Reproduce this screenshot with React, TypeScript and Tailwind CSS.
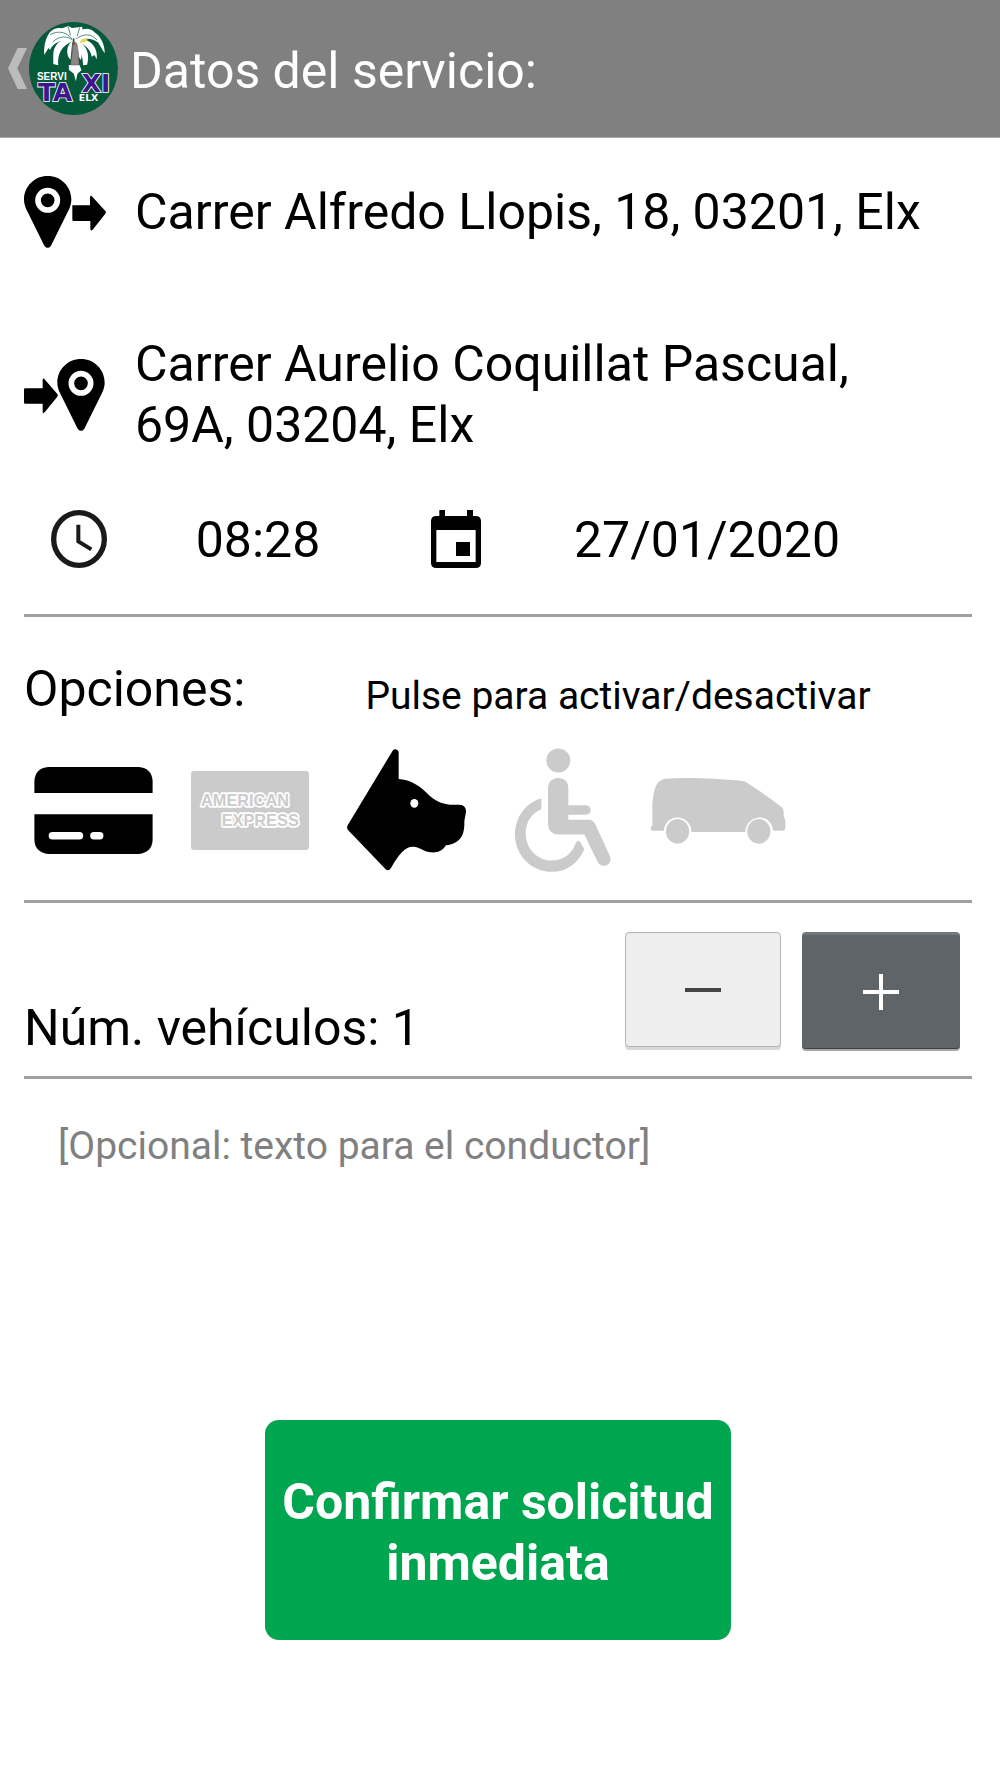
import { useState } from "react";
import type { ReactNode } from "react";

function Logo() {
  return (
    <svg viewBox="87 66 268 279" preserveAspectRatio="none" className="h-[93px] w-[89px] shrink-0" role="img" aria-label="Servi Taxi Elx">
      <ellipse cx="221" cy="205.500" rx="134" ry="139.500" fill="#045a3a" />
      <g fill="#fff">
        <path d="M221 112 C205 82 165 72 145 104 C136 118 131 142 133 164 L146 144 L150 150 C160 128 185 116 219 122Z" />
        <path d="M218 118 C190 112 160 128 160 166 L160 192 L175 196 C172 164 185 136 219 124Z" />
        <path d="M219 122 C204 132 198 150 205 170 L212 180 L217 130Z" />
        <path d="M224 112 C232 86 268 76 286 98 C303 108 316 136 315 160 C308 148 302 140 296 128 C278 112 252 114 226 122Z" />
        <path d="M224 116 C262 112 296 134 291 178 L284 165 L276 170 C272 146 254 130 224 125Z" />
        <path d="M224 122 C258 126 272 160 262 194 L250 196 C248 168 244 146 224 127Z" />
        <path d="M226 128 C244 142 250 160 243 180 L235 168Z" />
        <path d="M178 88 L206 78 L216 84 L248 80 L246 108 L225 116 L206 108Z" />
        <path d="M207 195 H239 L245 211 L233 221 L228 244 L222 221 L207 209Z" />
      </g>
      <g stroke="#045a3a" strokeWidth="2" fill="none">
        <path d="M150 104 C178 90 200 96 218 118 M205 80 L212 106 M240 82 L232 108 M158 126 C180 106 202 108 218 120 M228 117 C254 98 276 102 292 120" />
      </g>
      <path d="M238 130 L248 116 L264 118 L258 125Z" fill="#e5d84d" />
      <path d="M218 136 L222 124 L231 130 L236 160 L238 195 H212 L217 160Z" fill="#8c8787" stroke="#555" strokeWidth="1.500" />
      <path d="M219 126 h6 v10 h-6Z" fill="#994f36" />
      <g fontFamily="DejaVu Sans, sans-serif" fontWeight="700">
        <text x="111" y="239" fontSize="30" fill="#fff" fontFamily="Liberation Sans, sans-serif">SERVI</text>
        <g fontSize="75" fill="#3e168b" stroke="#fff" strokeWidth="5" paintOrder="stroke">
          <text x="114" y="302">TA</text>
          <text x="246" y="277">XI</text>
        </g>
        <text x="237" y="303" fontSize="28" fill="#fff">ELX</text>
      </g>
    </svg>
  );
}

function Pin({ x }: { x: number }) {
  return (
    <g transform={`translate(${x} 0)`}>
      <path d="M71 0 C31 0 0 32 0 70 C0 82 3 92 8 102 L61 209 Q71 222 81 209 L134 102 C139 92 142 82 142 70 C142 32 111 0 71 0Z" />
      <circle cx="71" cy="73" r="29" fill="none" stroke="#fff" strokeWidth="17" />
    </g>
  );
}

function OriginIcon() {
  return (
    <svg viewBox="0 0 246 216" className="h-[72px] w-[82px] shrink-0" aria-hidden="true">
      <Pin x={0} />
      <path d="M145 88 H198 V62 Q200 56 205 62 L244 105 Q247 109 244 113 L206 161 Q200 166 199 160 V135 H149 Q145 135 145 131Z" />
    </svg>
  );
}

function DestinationIcon() {
  return (
    <svg viewBox="0 0 246 216" className="h-[72px] w-[82px] shrink-0" aria-hidden="true">
      <Pin x={100} />
      <path d="M0 91 Q0 88 4 88 H56 V61 Q58 56 63 62 L100 105 Q103 109 100 113 L62 160 Q57 165 56 160 V134 H4 Q0 134 0 131Z" />
    </svg>
  );
}

function ClockIcon() {
  return (
    <svg viewBox="0 0 168 174" className="h-[58px] w-[56px]" fill="none" stroke="#1a1a1a" aria-hidden="true">
      <ellipse cx="84" cy="87" rx="76" ry="79" strokeWidth="16" />
      <path d="M82 44 V94 L121 118" strokeWidth="12" />
    </svg>
  );
}

function CalendarIcon() {
  return (
    <svg viewBox="0 0 150 174" className="h-[58px] w-[50px]" aria-hidden="true">
      <path fillRule="evenodd" d="M25 0 H42 V18 H108 V0 H126 V18 H134 Q150 18 150 34 V158 Q150 174 134 174 H16 Q0 174 0 158 V34 Q0 18 16 18 H25Z M16 60 V156 H134 V60Z" />
      <path d="M75 96 H117 V138 H75Z" />
    </svg>
  );
}

function CardIcon() {
  return (
    <svg viewBox="0 0 356 262" className="h-[87px] w-[119px]" fill="currentColor" aria-hidden="true">
      <path d="M0 78 V42 Q2 4 42 0 H314 Q354 4 356 42 V78Z" />
      <path d="M0 142 H356 V220 Q354 258 314 262 H42 Q2 258 0 220Z" />
      <path d="M54 207 H136 M179 207 H197" stroke="#fff" strokeWidth="22" strokeLinecap="round" />
    </svg>
  );
}

function AmexIcon() {
  return (
    <svg viewBox="0 0 354 237" className="h-[79px] w-[118px]" fill="currentColor" aria-hidden="true">
      <rect width="354" height="237" rx="9" />
      <g fontFamily="Liberation Sans, sans-serif" fontWeight="700" fontSize="49" stroke="#fff" strokeWidth="10" strokeLinejoin="round" paintOrder="stroke">
        <text x="30" y="106">AMERICAN</text>
        <text x="92" y="165">EXPRESS</text>
      </g>
    </svg>
  );
}

function DogIcon() {
  return (
    <svg viewBox="78 59 357 366" className="h-[122px] w-[119px]" fill="currentColor" aria-hidden="true">
      <path d="M215 64 Q220 58 228 61 Q233 63 233 70 V149 C264 151 294 166 318 192 C342 215 360 224 388 226 L416 226 Q436 228 435 248 L430 275 C431 310 424 342 375 348 C360 370 345 370 327 369 C304 365 294 351 275 352 C252 352 232 376 210 416 Q203 427 194 420 L81 302 Q76 296 80 288Z" />
      <ellipse cx="280" cy="222" rx="12" ry="13" fill="#fff" />
    </svg>
  );
}

function WheelchairIcon() {
  return (
    <svg viewBox="548 56 324 371" className="h-[124px] w-[108px]" fill="currentColor" aria-hidden="true">
      <circle cx="711" cy="93" r="36" />
      <path d="M680 176 Q682 147 711 145 Q740 147 741 176 V227 H793 Q808 229 808 241 Q808 255 793 256 H741 V271 H802 Q815 271 822 284 L866 380 Q872 399 856 407 Q839 413 830 399 L789 315 H711 Q682 313 680 284Z" />
      <path d="M660 206 V239 C629 251 613 280 613 311 C613 357 648 393 691 393 C726 393 753 372 764 339 Q770 330 777 338 L789 359 C770 402 735 427 691 427 C629 427 581 376 581 315 C581 264 612 220 660 206Z" />
    </svg>
  );
}

function VanIcon() {
  return (
    <svg viewBox="60 110 408 202" className="h-[67px] w-[136px]" fill="currentColor" aria-hidden="true">
      <path d="M66 258 V194 C68 165 72 146 80 132 Q86 118 105 115 C180 110 265 116 335 121 Q345 122 354 129 C386 149 418 172 453 199 Q462 205 462 217 V230 Q469 238 467 254 V265 Q466 272 458 272 H430 C428 218 350 218 346 276 H184 C182 218 104 218 101 272 H69 Q58 270 62 259Z" />
      <ellipse cx="142" cy="274" rx="35" ry="37" />
      <ellipse cx="387" cy="274" rx="35" ry="37" />
    </svg>
  );
}

const options: { id: string; label: string; icon: ReactNode }[] = [
  { id: "card", label: "Tarjeta", icon: <CardIcon /> },
  { id: "amex", label: "American Express", icon: <AmexIcon /> },
  { id: "pet", label: "Mascota", icon: <DogIcon /> },
  { id: "wheelchair", label: "Silla de ruedas", icon: <WheelchairIcon /> },
  { id: "van", label: "Furgoneta", icon: <VanIcon /> },
];

export default function App() {
  const [active, setActive] = useState<string[]>(["card", "pet"]);
  const [vehicles, setVehicles] = useState(1);

  const toggle = (id: string) =>
    setActive((now) => (now.includes(id) ? now.filter((item) => item !== id) : [...now, id]));

  return (
    <div className="min-h-screen bg-white font-[Roboto,sans-serif] text-[50px] leading-[61px] text-black">
      <header className="flex h-[138px] items-center border-b border-[#a6a6a6] bg-[#808080] pl-2 text-white">
        <button type="button" aria-label="Volver" className="flex shrink-0 items-center">
          <svg viewBox="0 0 57 123" className="h-[41px] w-[19px]" fill="#bcbcbc" aria-hidden="true">
            <path d="M29 0 H57 L28 61 L57 123 H29 L0 61Z" />
          </svg>
        </button>
        <span className="ml-[2px]"><Logo /></span>
        <h1 className="ml-3 pt-1.5">Datos del servicio:</h1>
      </header>

      <main className="pr-7 pl-6">
        <section className="border-b-3 border-[#a0a0a0] pb-10">
          <div className="flex min-h-[148px] items-center gap-[29px]">
            <OriginIcon />
            <p>Carrer Alfredo Llopis, 18, 03201, Elx</p>
          </div>
          <div className="flex min-h-[217px] items-center gap-[29px]">
            <DestinationIcon />
            <p className="max-w-[760px]">Carrer Aurelio Coquillat Pascual, 69A, 03204, Elx</p>
          </div>
          <div className="grid min-h-[71px] grid-cols-[110fr_248fr_148fr_354fr_88fr] place-items-center">
            <ClockIcon />
            <time className="pt-1">08:28</time>
            <CalendarIcon />
            <time className="pt-1" dateTime="2020-01-27">27/01/2020</time>
          </div>
        </section>

        <section className="border-b-3 border-[#a0a0a0] pt-[42px] pb-7">
          <div className="flex items-end gap-[120px]">
            <h2>Opciones:</h2>
            <p className="text-[39px] leading-[48px]">Pulse para activar/desactivar</p>
          </div>
          <div className="mt-7 flex items-center gap-[38px] pl-[10px]">
            {options.map(({ id, label, icon }) => (
              <button
                key={id}
                type="button"
                aria-label={label}
                aria-pressed={active.includes(id)}
                onClick={() => toggle(id)}
                className={active.includes(id) ? "text-black" : "text-[#cbcbcb]"}
              >
                {icon}
              </button>
            ))}
          </div>
        </section>

        <section className="flex items-end justify-between border-b-3 border-[#a0a0a0] pt-[29px] pr-3 pb-[17px]">
          <p>Núm. vehículos: {vehicles}</p>
          <div className="flex items-start gap-[21px] pb-[10px]">
            <button
              type="button"
              aria-label="Quitar vehículo"
              onClick={() => setVehicles((count) => Math.max(1, count - 1))}
              className="flex h-[115px] w-[156px] items-center justify-center rounded-[4px] border border-[#b4b4b4] bg-[#eeeeee] text-[#444] shadow-[0_3px_0_#d8d8d8]"
            >
              <svg viewBox="0 0 36 36" className="size-9" stroke="currentColor" strokeWidth="4" aria-hidden="true">
                <path d="M0 18 H36" />
              </svg>
            </button>
            <button
              type="button"
              aria-label="Añadir vehículo"
              onClick={() => setVehicles((count) => count + 1)}
              className="flex h-[117px] w-[158px] items-center justify-center rounded-[4px] border-t-3 border-b border-t-[#72777a] border-b-[#3c3f41] bg-[#5f6468] text-white shadow-[0_2px_0_#a8a8a8]"
            >
              <svg viewBox="0 0 36 36" className="size-9" stroke="currentColor" strokeWidth="4" aria-hidden="true">
                <path d="M0 18 H36 M18 0 V36" />
              </svg>
            </button>
          </div>
        </section>

        <textarea
          aria-label="Texto para el conductor"
          placeholder="[Opcional: texto para el conductor]"
          className="block h-[341px] w-full resize-none px-[34px] pt-[43px] text-[39px] leading-[48px] outline-none placeholder:text-[#808080]"
        />
        <button
          type="button"
          className="mx-auto block min-h-[220px] w-[466px] rounded-[14px] bg-[#00a54f] px-3 pt-1.5 font-bold text-white"
        >
          Confirmar solicitud inmediata
        </button>
      </main>
    </div>
  );
}
